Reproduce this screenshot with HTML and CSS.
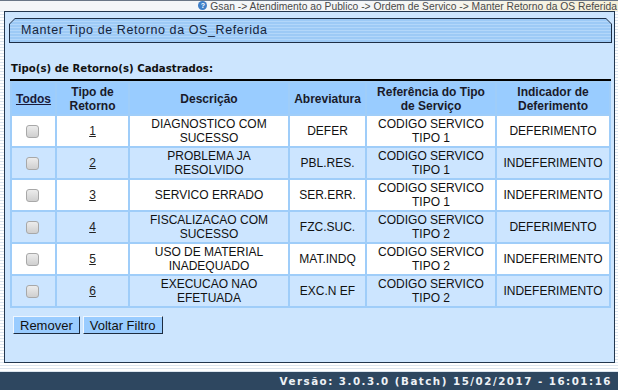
FILE: index.html
```html
<!DOCTYPE html>
<html lang="pt">
    <head>
        <meta charset="UTF-8" />
        <title>Manter Tipo de Retorno da OS_Referida</title>
        <link rel="stylesheet" href="styles.css">
    </head>
    <body>
        <!-- Caminho -->
        <div class="crumbs">
            <span class="help">?</span>
            Gsan -&gt; Atendimento ao Publico -&gt; Ordem de Servico -&gt; Manter Retorno da OS Referida
        </div>

        <div class="panel">
            <div class="tab">
                <div class="tab-inner">Manter Tipo de Retorno da OS_Referida</div>
            </div>

            <p class="label">Tipo(s) de Retorno(s) Cadastrados:</p>

            <table class="grid">
                <colgroup>
                    <col class="c-todos">
                    <col class="c-tipo">
                    <col class="c-desc">
                    <col class="c-abrev">
                    <col class="c-ref">
                    <col class="c-ind">
                </colgroup>
                <thead>
                    <tr>
                        <th><a href="#" class="todos">Todos</a></th>
                        <th>Tipo de<br>Retorno</th>
                        <th>Descrição</th>
                        <th>Abreviatura</th>
                        <th>Referência do Tipo<br>de Serviço</th>
                        <th>Indicador de<br>Deferimento</th>
                    </tr>
                </thead>
                <tbody>
                    <tr>
                        <td><input type="checkbox" class="check"></td>
                        <td><a href="#">1</a></td>
                        <td>DIAGNOSTICO COM<br>SUCESSO</td>
                        <td>DEFER</td>
                        <td>CODIGO SERVICO<br>TIPO 1</td>
                        <td>DEFERIMENTO</td>
                    </tr>
                    <tr class="alt">
                        <td><input type="checkbox" class="check"></td>
                        <td><a href="#">2</a></td>
                        <td>PROBLEMA JA<br>RESOLVIDO</td>
                        <td>PBL.RES.</td>
                        <td>CODIGO SERVICO<br>TIPO 1</td>
                        <td>INDEFERIMENTO</td>
                    </tr>
                    <tr>
                        <td><input type="checkbox" class="check"></td>
                        <td><a href="#">3</a></td>
                        <td>SERVICO ERRADO</td>
                        <td>SER.ERR.</td>
                        <td>CODIGO SERVICO<br>TIPO 1</td>
                        <td>INDEFERIMENTO</td>
                    </tr>
                    <tr class="alt">
                        <td><input type="checkbox" class="check"></td>
                        <td><a href="#">4</a></td>
                        <td>FISCALIZACAO COM<br>SUCESSO</td>
                        <td>FZC.SUC.</td>
                        <td>CODIGO SERVICO<br>TIPO 2</td>
                        <td>DEFERIMENTO</td>
                    </tr>
                    <tr>
                        <td><input type="checkbox" class="check"></td>
                        <td><a href="#">5</a></td>
                        <td>USO DE MATERIAL<br>INADEQUADO</td>
                        <td>MAT.INDQ</td>
                        <td>CODIGO SERVICO<br>TIPO 2</td>
                        <td>INDEFERIMENTO</td>
                    </tr>
                    <tr class="alt">
                        <td><input type="checkbox" class="check"></td>
                        <td><a href="#">6</a></td>
                        <td>EXECUCAO NAO<br>EFETUADA</td>
                        <td>EXC.N EF</td>
                        <td>CODIGO SERVICO<br>TIPO 2</td>
                        <td>INDEFERIMENTO</td>
                    </tr>
                </tbody>
            </table>

            <div class="actions">
                <button class="btn">Remover</button>
                <button class="btn">Voltar Filtro</button>
            </div>
        </div>

        <div class="spacer"></div>

        <div class="footer">Versão: 3.0.3.0 (Batch) 15/02/2017 - 16:01:16</div>
    </body>
</html>
```

FILE: styles.css
```css
html,
body {
    margin: 0;
    height: 390px;
    overflow: hidden;
}

body {
    background: repeating-linear-gradient(
        to bottom,
        #ffffff 0px,
        #ffffff 2px,
        #dce5ee 2px,
        #dce5ee 3px
    );
    font-family: "Liberation Sans", Arial, sans-serif;
    color: #111111;
}

.crumbs {
    height: 11px;
    line-height: 11px;
    font-size: 10.3px;
    color: #4a4a4a;
    text-align: right;
    white-space: nowrap;
    overflow: hidden;
    padding-right: 1px;
    border-top: 1px solid #6a7686;
    box-sizing: border-box;
    background: linear-gradient(to right, #f4f6f8 60%, #f6f0d8);
}

.help {
    display: inline-block;
    width: 9px;
    height: 9px;
    line-height: 9px;
    border-radius: 50%;
    background: #3f7fc8;
    color: #ffffff;
    font-size: 7px;
    font-weight: bold;
    text-align: center;
    vertical-align: top;
}

.panel {
    box-sizing: border-box;
    width: 611px;
    height: 352px;
    margin-left: 4px;
    border: 1px solid #22364e;
    background-color: #cce5fe;
    padding-top: 6px;
}

.tab {
    margin-left: 4px;
    width: 603px;
    height: 25px;
    padding: 1px;
    box-sizing: border-box;
    background-color: #1d2e46;
    clip-path: polygon(6px 0, calc(100% - 6px) 0, 100% 6px, 100% 100%, 0 100%, 0 6px);
}

.tab-inner {
    height: 23px;
    line-height: 23px;
    padding-left: 11px;
    font-size: 12.5px;
    letter-spacing: 0.6px;
    color: #16243a;
    background: repeating-linear-gradient(
        to bottom,
        #9dcaf6 0px,
        #9dcaf6 2px,
        #b3d7fa 2px,
        #b3d7fa 3px
    );
    clip-path: polygon(5px 0, calc(100% - 5px) 0, 100% 5px, 100% 100%, 0 100%, 0 5px);
}

.label {
    margin: 19px 0 0 6px;
    height: 17px;
    line-height: 13px;
    font-family: "DejaVu Sans", Verdana, sans-serif;
    font-size: 10.2px;
    font-weight: bold;
    color: #111111;
}

.grid {
    margin-left: 5px;
    width: 601px;
    table-layout: fixed;
    border-collapse: separate;
    border-spacing: 2px;
    border-top: 2px solid #000000;
    background-color: #9fcdf9;
    font-size: 12px;
    line-height: 14px;
}

.c-todos { width: 43px; }
.c-tipo { width: 71px; }
.c-desc { width: 158px; }
.c-abrev { width: 75px; }
.c-ref { width: 128px; }
.c-ind { width: 112px; }

.grid th {
    height: 31px;
    padding: 0;
    background-color: #99ccff;
    font-weight: bold;
    color: #1a1a2a;
    text-align: center;
}

.grid td {
    height: 30px;
    padding: 0;
    background-color: #ffffff;
    text-align: center;
    color: #111111;
}

.grid tr.alt td {
    background-color: #cce5ff;
}

.grid a {
    color: #222222;
}

.grid a.todos {
    color: #1a1a3a;
}

.check {
    appearance: none;
    -webkit-appearance: none;
    width: 13px;
    height: 13px;
    margin: 0 0 0 -2px;
    vertical-align: middle;
    border: 1px solid #a8a8a8;
    border-radius: 3px;
    background: linear-gradient(#ececec, #cfcfcf);
}

.actions {
    display: flex;
    gap: 3px;
    margin: 8px 0 0 8px;
}

.btn {
    height: 18px;
    padding: 0 6px;
    font-family: "Liberation Sans", Arial, sans-serif;
    font-size: 13px;
    color: #111111;
    background-color: #99ccff;
    border-style: solid;
    border-width: 1px;
    border-color: #eef6ff #1d2c40 #1d2c40 #eef6ff;
    cursor: pointer;
}

.spacer {
    height: 9px;
}

.footer {
    height: 18px;
    line-height: 18px;
    background-color: #2e4760;
    color: #eef2f6;
    text-align: right;
    padding-right: 6px;
    font-family: "DejaVu Sans", Verdana, sans-serif;
    font-size: 10.3px;
    font-weight: bold;
    letter-spacing: 1.5px;
}
```
